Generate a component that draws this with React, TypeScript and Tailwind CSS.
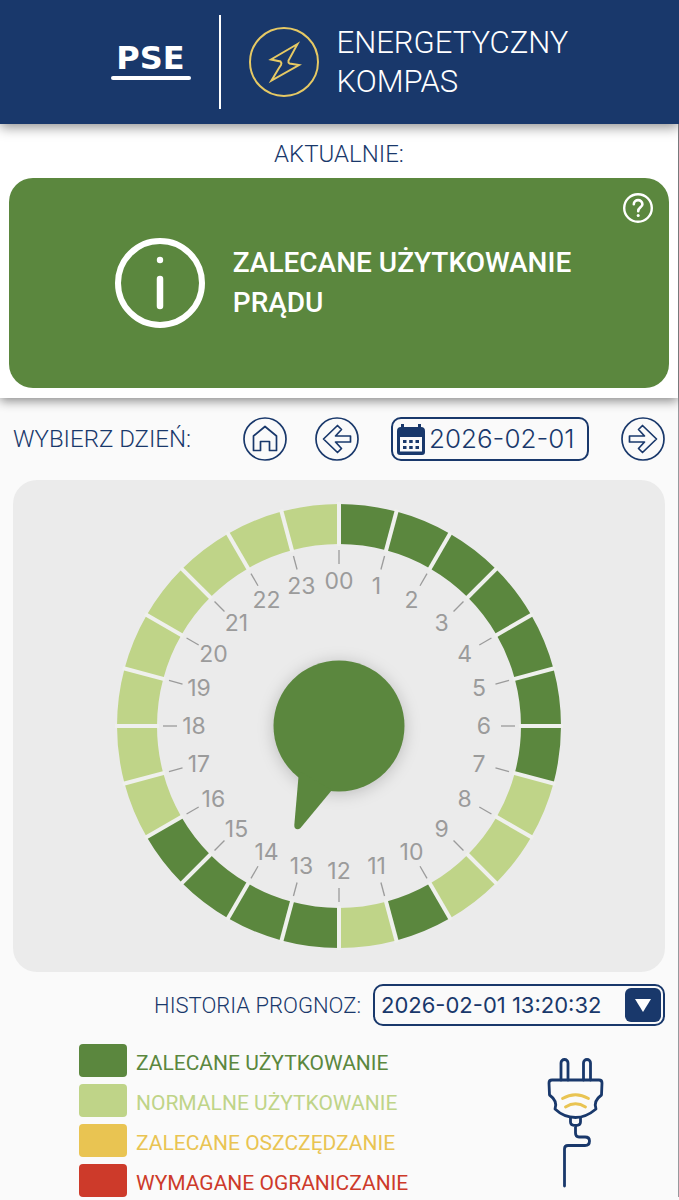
import React, { useState } from "react";

type Level = "recommended" | "normal";

const LEVEL_FILL: Record<Level, string> = {
  recommended: "#5b873e",
  normal: "#bfd488",
};

const RECOMMENDED_HOURS = [0, 1, 2, 3, 4, 5, 6, 10, 12, 13, 14, 15];

const HOURS = Array.from({ length: 24 }, (_, hour) => ({
  hour,
  label: hour === 0 ? "00" : String(hour),
  level: (RECOMMENDED_HOURS.includes(hour) ? "recommended" : "normal") as Level,
}));

const LEGEND = [
  { label: "ZALECANE UŻYTKOWANIE", swatch: "bg-[#5b873e]", text: "text-[#5b873e]" },
  { label: "NORMALNE UŻYTKOWANIE", swatch: "bg-[#bfd488]", text: "text-[#bfd488]" },
  { label: "ZALECANE OSZCZĘDZANIE", swatch: "bg-[#e9c452]", text: "text-[#e9c452]" },
  { label: "WYMAGANE OGRANICZANIE", swatch: "bg-[#cd3a2a]", text: "text-[#cd3a2a]" },
];

const CENTER = 223;

// Point on the dial, 0 degrees at the top, clockwise
function polar(radius: number, degrees: number) {
  const rad = (degrees * Math.PI) / 180;
  return { x: CENTER + radius * Math.sin(rad), y: CENTER - radius * Math.cos(rad) };
}

function segmentPath(hour: number) {
  const a = polar(222, hour * 15);
  const b = polar(222, hour * 15 + 15);
  const c = polar(182, hour * 15 + 15);
  const d = polar(182, hour * 15);
  return `M${a.x} ${a.y}A222 222 0 0 1 ${b.x} ${b.y}L${c.x} ${c.y}A182 182 0 0 0 ${d.x} ${d.y}Z`;
}

function Header() {
  return (
    <header className="relative z-20 flex items-center justify-center bg-[#19386b] py-[15px] shadow-[0_3px_12px_rgba(0,0,0,0.45)]">
      <div className="mr-7 flex w-20 flex-col items-center">
        <span className="font-['DejaVu_Sans',sans-serif] text-[32px] leading-7 font-bold text-white">PSE</span>
        <span className="mt-1 h-1 w-full rounded-full bg-white" />
      </div>
      <div className="h-[94px] w-0.5 bg-white" />
      <svg viewBox="0 0 70 70" className="ml-7 h-[70px] w-[70px]" fill="none" stroke="#e6c964" strokeWidth="2">
        <circle cx="35" cy="35" r="34" />
        <path d="M48.500 17L22 32.500L31.500 34.500Q33 36 32 38L30 41L22.500 53.500L50 38L40.500 36.500Q39 35.500 39.500 33.500Z" />
      </svg>
      <h1 className="ml-[18px] text-[31px] leading-[39px] font-light text-white">
        ENERGETYCZNY
        <br />
        KOMPAS
      </h1>
    </header>
  );
}

function CurrentStatus() {
  return (
    <section className="relative z-10 bg-white px-[9px] pb-[10px] shadow-[0_3px_10px_rgba(0,0,0,0.45)]">
      <h2 className="pt-3 pb-[6px] text-center text-2xl leading-9 font-light">AKTUALNIE:</h2>
      <div className="relative flex h-[210px] items-center justify-center gap-7 rounded-3xl bg-[#5b873e] pl-2 text-white">
        <svg viewBox="0 0 90 90" className="h-[90px] w-[90px]" fill="none" stroke="currentColor" strokeLinecap="round">
          <circle cx="45" cy="45" r="42" strokeWidth="6" />
          <path d="M45 41V68" strokeWidth="6.500" />
          <circle cx="45" cy="22" r="3.200" fill="currentColor" stroke="none" />
        </svg>
        <p className="text-[28px] leading-10 font-medium">
          ZALECANE UŻYTKOWANIE
          <br />
          PRĄDU
        </p>
        <button type="button" aria-label="Pomoc" className="absolute top-[15px] right-4">
          <svg viewBox="0 0 30 30" className="h-[30px] w-[30px]" fill="none" stroke="currentColor" strokeLinecap="round">
            <circle cx="15" cy="15" r="13.800" strokeWidth="2.400" />
            <path d="M10.800 11.200C10.800 5.800 19.400 5.800 19.400 11.200C19.400 14.400 15.200 14.400 15.200 18.200" strokeWidth="2.600" />
            <circle cx="15.200" cy="22.500" r="1.500" fill="currentColor" stroke="none" />
          </svg>
        </button>
      </div>
    </section>
  );
}

function RoundButton({ label, onClick, path }: { label: string; onClick?: () => void; path: string }) {
  return (
    <button type="button" aria-label={label} onClick={onClick}>
      <svg viewBox="0 0 44 44" className="h-11 w-11" fill="none" stroke="currentColor" strokeWidth="1.700" strokeLinejoin="round">
        <circle cx="22" cy="22" r="21" />
        <path d={path} />
      </svg>
    </button>
  );
}

function DayPicker() {
  const [day, setDay] = useState("2026-02-01");

  const shiftDay = (days: number) => {
    const date = new Date(day);
    if (isNaN(date.getTime())) return;
    date.setDate(date.getDate() + days);
    setDay(date.toISOString().slice(0, 10));
  };

  return (
    <div className="flex items-center justify-between gap-3">
      <label htmlFor="day" className="text-2xl font-light whitespace-nowrap">
        WYBIERZ DZIEŃ:
      </label>
      <div className="flex items-center gap-8">
        <div className="flex gap-7">
          <RoundButton
            label="Dzisiaj"
            onClick={() => setDay("2026-02-01")}
            path="M22 9.500L10.500 19V33.500H17.500V24.500H26.500V33.500H33.500V19Z"
          />
          <RoundButton
            label="Poprzedni dzień"
            onClick={() => shiftDay(-1)}
            path="M8.500 22L22.500 8.500L26.500 12.500L20.500 19H35.500V25H20.500L26.500 31.500L22.500 35.500Z"
          />
        </div>
        <div className="flex h-11 items-center gap-1 rounded-[10px] border-2 border-[#19386b] px-1">
          <svg viewBox="0 0 28 31" className="h-[31px] w-7" fill="currentColor">
            <path
              fillRule="evenodd"
              d="M4 0h3v3h14V0h3v3a4 4 0 0 1 4 4v21a3 3 0 0 1-3 3H3a3 3 0 0 1-3-3V7a4 4 0 0 1 4-4ZM3 13v14.500h22V13Z"
            />
            <path d="M6 16h3.500v3H6ZM12.200 16h3.500v3h-3.500ZM18.500 16H22v3h-3.500ZM6 22h3.500v3H6ZM12.200 22h3.500v3h-3.500ZM18.500 22H22v3h-3.500Z" />
          </svg>
          <input
            id="day"
            type="text"
            value={day}
            onChange={(e) => setDay(e.target.value)}
            className="w-[154px] bg-transparent font-[Inter,sans-serif] text-[26px] leading-9 font-light outline-none"
          />
        </div>
        <RoundButton
          label="Następny dzień"
          onClick={() => shiftDay(1)}
          path="M35.500 22L21.500 8.500L17.500 12.500L23.500 19H8.500V25H23.500L17.500 31.500L21.500 35.500Z"
        />
      </div>
    </div>
  );
}

function Dial() {
  return (
    <div className="mt-[19px] flex justify-center rounded-3xl bg-[#ebebeb] py-[23px]">
      <svg viewBox="0 0 446 446" className="w-full max-w-[446px] overflow-visible">
        {HOURS.map(({ hour, level }) => (
          <path key={hour} d={segmentPath(hour)} fill={LEVEL_FILL[level]} />
        ))}
        {HOURS.map(({ hour, label }) => {
          const outer = polar(224, hour * 15);
          const inner = polar(180, hour * 15);
          const tickStart = polar(176, hour * 15);
          const tickEnd = polar(162, hour * 15);
          const text = polar(145, hour * 15);
          return (
            <g key={hour}>
              <line x1={outer.x} y1={outer.y} x2={inner.x} y2={inner.y} stroke="#eff0ed" strokeWidth="4" />
              <line x1={tickStart.x} y1={tickStart.y} x2={tickEnd.x} y2={tickEnd.y} stroke="#9b9b9b" strokeWidth="1.300" />
              <text
                x={text.x}
                y={text.y + 8}
                textAnchor="middle"
                fill="#9b9b9b"
                className="font-[Inter,sans-serif] text-[23px]"
              >
                {label}
              </text>
            </g>
          );
        })}
        <g fill="#5b873e">
          <circle cx={CENTER} cy={CENTER} r="65.500" className="drop-shadow-[0_2px_8px_rgba(0,0,0,0.2)]" />
          <path d="M183 268L178.300 322C178 326.500 182 327.500 184.500 325L216 287Z" />
        </g>
      </svg>
    </div>
  );
}

function ForecastHistory() {
  return (
    <div className="mt-3 flex items-center justify-end gap-3">
      <label htmlFor="history" className="text-[22px] font-light">
        HISTORIA PROGNOZ:
      </label>
      <div className="relative">
        <select
          id="history"
          className="h-[42px] w-[292px] appearance-none rounded-[10px] border-2 border-[#19386b] bg-transparent pr-11 pl-[6px] font-[Inter,sans-serif] text-[22px]"
        >
          <option>2026-02-01 13:20:32</option>
        </select>
        <span className="pointer-events-none absolute top-1 right-1 flex h-[34px] w-9 items-center justify-center rounded-md bg-[#19386b]">
          <svg viewBox="0 0 16 13" className="h-[13px] w-4" fill="white">
            <path d="M0 0H16L8 13Z" />
          </svg>
        </span>
      </div>
    </div>
  );
}

function PlugIcon() {
  return (
    <svg
      viewBox="0 0 58 130"
      className="h-[130px] w-[58px]"
      fill="none"
      stroke="#19386b"
      strokeWidth="2.800"
      strokeLinecap="round"
      strokeLinejoin="round"
    >
      <path d="M14 22V5a3.500 3.500 0 0 1 7 0V22M36.500 22V5a3.500 3.500 0 0 1 7 0V22" />
      <path d="M5 22H52Q55 22 55 25L54.500 37Q46 43 49 51Q39 59.500 28.500 59.500Q17 59.500 8 51Q11 43 2.500 37L2 25Q2 22 5 22Z" />
      <path d="M23.500 60V64Q23.500 67.500 28.500 67.500Q33.500 67.500 33.500 64V60M28.500 68V75Q28.500 79 32 79H38Q42.500 79 42.500 83Q42.500 87.500 38 87.500H21Q17.500 87.500 17.500 91V128" />
      <path d="M15.500 40.500Q28.500 33 41.500 40.500M18.500 49Q28.500 42.500 38.500 49" stroke="#e9c452" />
    </svg>
  );
}

export default function App() {
  return (
    <div className="min-h-screen bg-[#fafafa] font-[Roboto,sans-serif] text-[#19386b]">
      <Header />
      <main className="border-r border-[#97999d]">
        <CurrentStatus />
        <div className="px-[13px] pt-[19px]">
          <DayPicker />
          <Dial />
          <ForecastHistory />
          <div className="mt-[18px] flex justify-between pr-[60px] pl-[66px]">
            <ul className="flex flex-col gap-[7px]">
              {LEGEND.map((item) => (
                <li key={item.label} className="flex items-center gap-[9px]">
                  <span className={`h-[33px] w-12 rounded ${item.swatch}`} />
                  <span className={`pt-1 text-[21px] leading-7 ${item.text}`}>{item.label}</span>
                </li>
              ))}
            </ul>
            <div className="pt-[14px]">
              <PlugIcon />
            </div>
          </div>
        </div>
      </main>
    </div>
  );
}
